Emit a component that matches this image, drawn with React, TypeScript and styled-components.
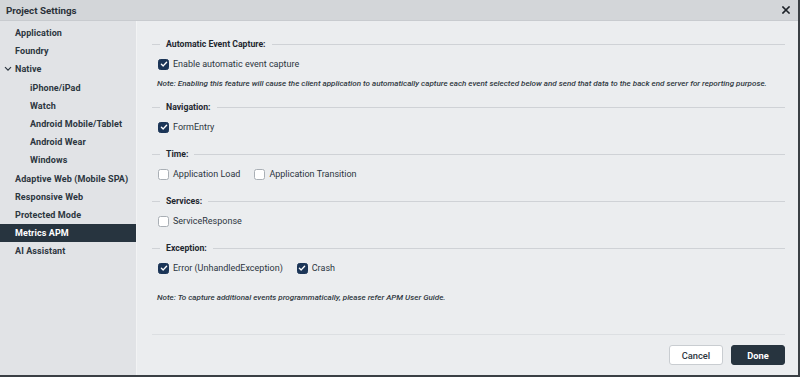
import React from 'react'
import styled, { createGlobalStyle } from 'styled-components'

const GlobalStyle = createGlobalStyle`
    html, body {
        margin: 0;
        padding: 0;
        background: #ebedef;
        font-family: Roboto, "Liberation Sans", sans-serif;
    }
`

const Dialog = styled.div`
    width: 800px;
    height: 377px;
    box-sizing: border-box;
    display: flex;
    flex-direction: column;
    border-right: 2px solid #3a3f44;
    border-bottom: 2px solid #3a3f44;
    background: #ebedef;
    color: #26313b;
    overflow: hidden;
`

const TitleBar = styled.div`
    height: 20px;
    flex: none;
    display: flex;
    align-items: center;
    justify-content: space-between;
    padding: 0 8px 0 6px;
    background: #d3d6d9;
    border-bottom: 1px solid #c8cbcf;
    font-size: 9.8px;
    font-weight: 700;
    color: #2b3239;
`

const CloseButton = styled.div`
    width: 8px;
    height: 8px;
    display: flex;
    align-items: center;
    justify-content: center;
`

const Body = styled.div`
    flex: 1;
    display: flex;
    min-height: 0;
`

const Sidebar = styled.div`
    width: 136px;
    flex: none;
    background: #e1e3e6;
    border-right: 1px solid #f2f3f4;
    padding-top: 3px;
    display: flex;
    flex-direction: column;
`

interface NavItemProps {
    level?: number
    active?: boolean
}

const NavItem = styled.div<NavItemProps>`
    height: 18.2px;
    flex: none;
    display: flex;
    align-items: center;
    padding-left: ${ props => props.level === 1 ? 30 : 15 }px;
    position: relative;
    font-size: 9px;
    font-weight: 700;
    letter-spacing: 0.1px;
    color: ${ props => props.active ? '#ffffff' : '#2c3640' };
    background: ${ props => props.active ? '#27343f' : 'transparent' };
`

const Chevron = styled.svg`
    position: absolute;
    left: 4px;
    top: 6px;
`

const Main = styled.div`
    flex: 1;
    display: flex;
    flex-direction: column;
    padding: 0 13px 0 15px;
`

const Content = styled.div`
    flex: 1;
    padding-top: 17px;
`

const SectionHeading = styled.div`
    display: flex;
    align-items: center;
    gap: 6px;
    height: 12px;
    font-size: 8.7px;
    font-weight: 700;
    color: #1f2830;

    &::before {
        content: '';
        width: 8px;
        height: 1px;
        background: #cfd2d6;
    }

    &::after {
        content: '';
        flex: 1;
        height: 1px;
        background: #cfd2d6;
    }
`

interface SectionProps {
    spacing?: number
}

const Section = styled.div<SectionProps>`
    margin-bottom: ${ props => props.spacing ?? 15 }px;
`

const OptionRow = styled.div`
    display: flex;
    gap: 14px;
    height: 12px;
    margin-top: 8px;
    padding-left: 6px;
`

const Option = styled.label`
    display: flex;
    align-items: center;
    gap: 4px;
    font-size: 9px;
    color: #2c353e;
`

interface BoxProps {
    checked?: boolean
}

const Box = styled.span<BoxProps>`
    width: 11px;
    height: 11px;
    box-sizing: border-box;
    border-radius: 2.5px;
    display: flex;
    align-items: center;
    justify-content: center;
    background: ${ props => props.checked ? '#1b3557' : '#ffffff' };
    border: 1px solid ${ props => props.checked ? '#1b3557' : '#a9afb5' };
`

interface NoteProps {
    gap?: number
}

const Note = styled.div<NoteProps>`
    height: 10px;
    line-height: 10px;
    font-size: 8.05px;
    font-style: italic;
    font-weight: 500;
    color: #30383f;
    padding-left: 5px;
    margin-top: ${ props => props.gap ?? 9 }px;
`

const Footer = styled.div`
    height: 41px;
    flex: none;
    box-sizing: border-box;
    border-top: 1px solid #dcdfe2;
    display: flex;
    align-items: center;
    justify-content: flex-end;
    gap: 8px;
`

interface ButtonProps {
    primary?: boolean
}

const Button = styled.div<ButtonProps>`
    width: 54px;
    height: 20px;
    box-sizing: border-box;
    border-radius: 3px;
    display: flex;
    align-items: center;
    justify-content: center;
    font-size: 9.3px;
    font-weight: ${ props => props.primary ? 700 : 500 };
    background: ${ props => props.primary ? '#27343f' : '#ffffff' };
    color: ${ props => props.primary ? '#ffffff' : '#2c353e' };
    border: 1px solid ${ props => props.primary ? '#27343f' : '#c9cdd1' };
`

const navItems: { label: string, level?: number, expandable?: boolean }[] = [
    { label: 'Application' },
    { label: 'Foundry' },
    { label: 'Native', expandable: true },
    { label: 'iPhone/iPad', level: 1 },
    { label: 'Watch', level: 1 },
    { label: 'Android Mobile/Tablet', level: 1 },
    { label: 'Android Wear', level: 1 },
    { label: 'Windows', level: 1 },
    { label: 'Adaptive Web (Mobile SPA)' },
    { label: 'Responsive Web' },
    { label: 'Protected Mode' },
    { label: 'Metrics APM' },
    { label: 'AI Assistant' },
]

const Check = ({ checked }: { checked?: boolean }) => (
    <Box checked={ checked }>
        { checked &&
            <svg width="8" height="8" viewBox="0 0 8 8">
                <path d="M1.4 4.2 L3.2 5.9 L6.6 2.2" fill="none" stroke="#ffffff" strokeWidth="1.4" strokeLinecap="round" strokeLinejoin="round" />
            </svg>
        }
    </Box>
)

const CheckOption = ({ label, checked }: { label: string, checked?: boolean }) => (
    <Option><Check checked={ checked } />{ label }</Option>
)

const App: React.FC = () => {
    return (
        <>
            <GlobalStyle />
            <Dialog>
                <TitleBar>
                    Project Settings
                    <CloseButton>
                        <svg width="8" height="8" viewBox="0 0 8 8">
                            <path d="M1 1 L7 7 M7 1 L1 7" stroke="#1d2329" strokeWidth="1.6" strokeLinecap="square" />
                        </svg>
                    </CloseButton>
                </TitleBar>
                <Body>
                    <Sidebar>
                        {
                            navItems.map((item, index) =>
                                <NavItem key={ index } level={ item.level } active={ item.label === 'Metrics APM' }>
                                    { item.expandable &&
                                        <Chevron width="8" height="6" viewBox="0 0 8 6">
                                            <path d="M1 1.2 L4 4.2 L7 1.2" fill="none" stroke="#2c3640" strokeWidth="1.2" />
                                        </Chevron>
                                    }
                                    { item.label }
                                </NavItem>
                            )
                        }
                    </Sidebar>
                    <Main>
                        <Content>
                            <Section spacing={ 12 }>
                                <SectionHeading>Automatic Event Capture:</SectionHeading>
                                <OptionRow>
                                    <CheckOption label="Enable automatic event capture" checked />
                                </OptionRow>
                                <Note>Note: Enabling this feature will cause the client application to automatically capture each event selected below and send that data to the back end server for reporting purpose.</Note>
                            </Section>
                            <Section>
                                <SectionHeading>Navigation:</SectionHeading>
                                <OptionRow>
                                    <CheckOption label="FormEntry" checked />
                                </OptionRow>
                            </Section>
                            <Section>
                                <SectionHeading>Time:</SectionHeading>
                                <OptionRow>
                                    <CheckOption label="Application Load" />
                                    <CheckOption label="Application Transition" />
                                </OptionRow>
                            </Section>
                            <Section>
                                <SectionHeading>Services:</SectionHeading>
                                <OptionRow>
                                    <CheckOption label="ServiceResponse" />
                                </OptionRow>
                            </Section>
                            <Section>
                                <SectionHeading>Exception:</SectionHeading>
                                <OptionRow>
                                    <CheckOption label="Error (UnhandledException)" checked />
                                    <CheckOption label="Crash" checked />
                                </OptionRow>
                                <Note gap={ 19 }>Note: To capture additional events programmatically, please refer APM User Guide.</Note>
                            </Section>
                        </Content>
                        <Footer>
                            <Button>Cancel</Button>
                            <Button primary>Done</Button>
                        </Footer>
                    </Main>
                </Body>
            </Dialog>
        </>
    )
}

export default App
